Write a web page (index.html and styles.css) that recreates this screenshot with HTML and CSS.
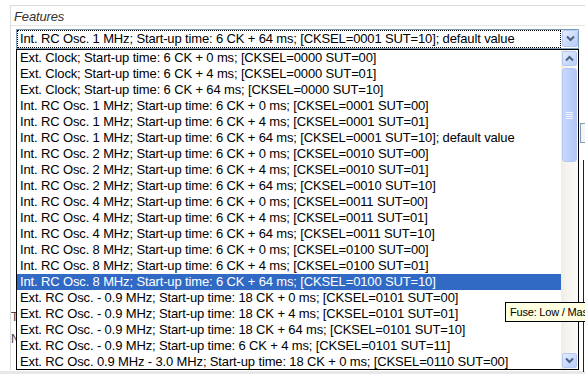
FILE: index.html
```html
<!DOCTYPE html>
<html lang="en">
<head>
  <meta charset="UTF-8">
  <title>Fuses – Features</title>
  <link rel="stylesheet" href="styles.css">
</head>
<body>
  <div class="page">
    <div class="panel">
      <div class="legend">Features</div>
      <div class="combo">
        <div class="combo-text"><span>Int. RC Osc. 1 MHz; Start-up time: 6 CK + 64 ms; [CKSEL=0001 SUT=10]; default value</span></div>
        <div class="xp-btn combo-btn">
          <svg width="9" height="7" viewBox="0 0 9 7"><path d="M1 1.5 L4.5 5 L8 1.5" fill="none" stroke="#4d6185" stroke-width="2"/></svg>
        </div>
      </div>
      <div class="behind">
        <div class="behind-label">T</div>
        <div class="behind-label">N</div>
      </div>
    </div>
    <div class="footer-band"></div>

    <div class="side-box"></div>
    <div class="side-line"></div>

    <div class="droplist">
      <ul class="options">
        <li>Ext. Clock; Start-up time: 6 CK + 0 ms; [CKSEL=0000 SUT=00]</li>
        <li>Ext. Clock; Start-up time: 6 CK + 4 ms; [CKSEL=0000 SUT=01]</li>
        <li>Ext. Clock; Start-up time: 6 CK + 64 ms; [CKSEL=0000 SUT=10]</li>
        <li>Int. RC Osc. 1 MHz; Start-up time: 6 CK + 0 ms; [CKSEL=0001 SUT=00]</li>
        <li>Int. RC Osc. 1 MHz; Start-up time: 6 CK + 4 ms; [CKSEL=0001 SUT=01]</li>
        <li>Int. RC Osc. 1 MHz; Start-up time: 6 CK + 64 ms; [CKSEL=0001 SUT=10]; default value</li>
        <li>Int. RC Osc. 2 MHz; Start-up time: 6 CK + 0 ms; [CKSEL=0010 SUT=00]</li>
        <li>Int. RC Osc. 2 MHz; Start-up time: 6 CK + 4 ms; [CKSEL=0010 SUT=01]</li>
        <li>Int. RC Osc. 2 MHz; Start-up time: 6 CK + 64 ms; [CKSEL=0010 SUT=10]</li>
        <li>Int. RC Osc. 4 MHz; Start-up time: 6 CK + 0 ms; [CKSEL=0011 SUT=00]</li>
        <li>Int. RC Osc. 4 MHz; Start-up time: 6 CK + 4 ms; [CKSEL=0011 SUT=01]</li>
        <li>Int. RC Osc. 4 MHz; Start-up time: 6 CK + 64 ms; [CKSEL=0011 SUT=10]</li>
        <li>Int. RC Osc. 8 MHz; Start-up time: 6 CK + 0 ms; [CKSEL=0100 SUT=00]</li>
        <li>Int. RC Osc. 8 MHz; Start-up time: 6 CK + 4 ms; [CKSEL=0100 SUT=01]</li>
        <li class="selected">Int. RC Osc. 8 MHz; Start-up time: 6 CK + 64 ms; [CKSEL=0100 SUT=10]</li>
        <li>Ext. RC Osc. - 0.9 MHz; Start-up time: 18 CK + 0 ms; [CKSEL=0101 SUT=00]</li>
        <li>Ext. RC Osc. - 0.9 MHz; Start-up time: 18 CK + 4 ms; [CKSEL=0101 SUT=01]</li>
        <li>Ext. RC Osc. - 0.9 MHz; Start-up time: 18 CK + 64 ms; [CKSEL=0101 SUT=10]</li>
        <li>Ext. RC Osc. - 0.9 MHz; Start-up time: 6 CK + 4 ms; [CKSEL=0101 SUT=11]</li>
        <li>Ext. RC Osc. 0.9 MHz - 3.0 MHz; Start-up time: 18 CK + 0 ms; [CKSEL=0110 SUT=00]</li>
      </ul>
      <div class="vscroll">
        <div class="xp-btn sb-btn">
          <svg width="9" height="7" viewBox="0 0 9 7"><path d="M1 5.5 L4.5 2 L8 5.5" fill="none" stroke="#4d6185" stroke-width="2"/></svg>
        </div>
        <div class="thumb">
          <div class="grip"></div>
        </div>
        <div class="track-rest"></div>
        <div class="xp-btn sb-btn">
          <svg width="9" height="7" viewBox="0 0 9 7"><path d="M1 1.5 L4.5 5 L8 1.5" fill="none" stroke="#4d6185" stroke-width="2"/></svg>
        </div>
      </div>
    </div>

    <div class="tooltip">Fuse: Low / Mas</div>
  </div>
</body>
</html>
```

FILE: styles.css
```css
body {
  margin: 0;
  padding: 0;
  font-family: "Liberation Sans", Arial, sans-serif;
  font-size: 13px;
  letter-spacing: -0.14px;
  color: #000;
  background: #fff;
  overflow: hidden;
}
.page {
  position: relative;
  width: 585px;
  height: 374px;
  overflow: hidden;
}
.panel {
  margin: 5px 0 0 10px;
  height: 364px;
  border-top: 1px solid #dcdcdc;
  border-left: 1px solid #dcdcdc;
  display: flex;
  flex-direction: column;
}
.legend {
  font-style: italic;
  color: #333;
  padding: 3px 0 0 3px;
  height: 16px;
  line-height: 16px;
  border-bottom: 1px solid #e4e4e4;
}
.combo {
  margin: 3px 0 0 5px;
  width: 563px;
  height: 20px;
  box-sizing: border-box;
  border: 1px solid #7f9db9;
  display: flex;
  background: #fff;
}
.combo-text {
  flex: 1;
  border: 1px dotted #000;
  padding-left: 2px;
  line-height: 16px;
  white-space: nowrap;
  overflow: hidden;
}
.xp-btn {
  box-sizing: border-box;
  border: 1px solid #b4c8f6;
  border-radius: 2px;
  background: linear-gradient(135deg, #e6eefe 0%, #c9d9fc 60%, #b8cdf8 100%);
  display: flex;
  align-items: center;
  justify-content: center;
}
.combo-btn {
  width: 16px;
  height: 17px;
  margin: 0 0 0 1px;
}
.behind {
  margin-top: auto;
  display: flex;
  flex-direction: column;
  gap: 6px;
  padding-bottom: 22px;
}
.behind-label {
  font-size: 12px;
  color: #444;
  height: 16px;
}
.footer-band {
  position: absolute;
  left: 0;
  right: 0;
  bottom: 0;
  height: 3px;
  background: #e8e8e8;
}
.side-box {
  position: absolute;
  left: 580px;
  top: 123px;
  width: 8px;
  height: 18px;
  border: 1px solid #7f9db9;
  background: #f4f4f4;
}
.side-line {
  position: absolute;
  left: 583px;
  top: 160px;
  width: 1px;
  height: 212px;
  background: #222;
}
.droplist {
  position: absolute;
  left: 16px;
  top: 49px;
  width: 563px;
  height: 321px;
  box-sizing: border-box;
  border: 1px solid #000;
  background: #fff;
  display: flex;
}
.options {
  list-style: none;
  margin: 0;
  padding: 0;
  flex: 1;
  overflow: hidden;
}
.options li {
  height: 16px;
  line-height: 16px;
  padding-left: 3px;
  white-space: nowrap;
}
.options li.selected {
  background: #316ac5;
  color: #fff;
}
.vscroll {
  width: 17px;
  box-sizing: border-box;
  padding: 1px;
  background: linear-gradient(to right, #eeede6, #f5f4ef 40%, #fbfaf7);
  display: flex;
  flex-direction: column;
}
.sb-btn {
  height: 15px;
  width: 15px;
}
.thumb {
  margin-top: 2px;
  height: 94px;
  box-sizing: border-box;
  border: 1px solid #b4c8f6;
  border-radius: 3px;
  background: linear-gradient(to right, #c9d8fc, #bccffb 50%, #b3c8f8);
  display: flex;
  align-items: center;
  justify-content: center;
}
.grip {
  width: 7px;
  height: 7px;
  background: repeating-linear-gradient(to bottom, #eef3fe 0, #eef3fe 1px, transparent 1px, transparent 2px);
}
.track-rest {
  flex: 1;
}
.tooltip {
  position: absolute;
  left: 505px;
  top: 302px;
  width: 80px;
  height: 20px;
  box-sizing: border-box;
  padding: 0 0 0 4px;
  border: 1px solid #000;
  border-right: none;
  background: #ffffe1;
  font-size: 11px;
  letter-spacing: -0.2px;
  line-height: 18px;
  white-space: nowrap;
  overflow: hidden;
}
```
